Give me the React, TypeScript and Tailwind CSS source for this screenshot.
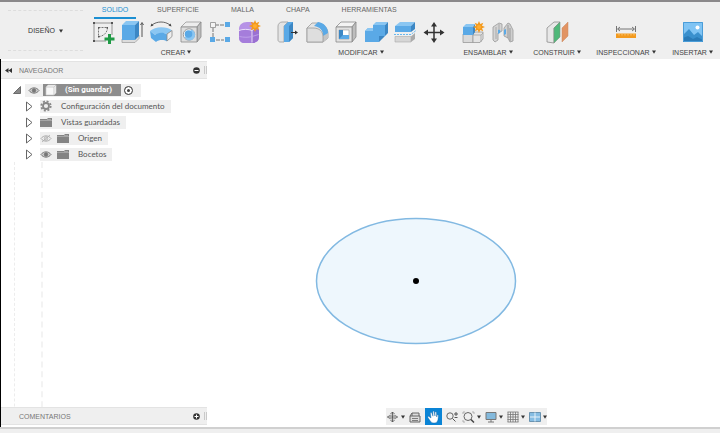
import type { ReactNode } from "react";

const BLUE = "#5aa9e6";
const BLUE_DARK = "#3c87c4";
const BLUE_LIGHT = "#8ac6f2";

function Svg({ children, w = 24, h = 24 }: { children: ReactNode; w?: number; h?: number }) {
  return (
    <svg width={w} height={h} viewBox={`0 0 ${w} ${h}`} fill="none" aria-hidden="true" className="block shrink-0">
      {children}
    </svg>
  );
}

function Caret() {
  return (
    <svg width="4" height="4" viewBox="0 0 4 4" aria-hidden="true" className="block shrink-0">
      <path d="M0 .5h4L2 3.7z" fill="#333" />
    </svg>
  );
}

function SketchIcon() {
  return (
    <Svg>
      <path d="M3 3h18M3 3v18M3 21h12M21 3v12" stroke="#8a8a8a" strokeWidth=".9" />
      <path d="M7.500 7.500h9c0 5-4 9-9 9z" stroke="#777" strokeDasharray="2 1" />
      <g fill="#555">
        <path d="M2 2h2v2H2zM20 2h2v2h-2zM2 20h2v2H2zM7 7h1.500v1.500H7zM15.500 7H17v1.500h-1.500zM7 16h1.500v1.500H7z" />
      </g>
      <path d="M17 14h3v3.500h3.500v3H20V24h-3v-3.500h-3.500v-3H17z" fill="#1f9a45" />
    </Svg>
  );
}

function ExtrudeIcon() {
  return (
    <Svg>
      <path d="M2 19v3.500h13l4-4V15z" fill="#dcdcdc" stroke="#999" strokeWidth=".7" />
      <path d="M2 5l4-4h13l-4 4z" fill={BLUE_LIGHT} />
      <path d="M2 5h13v15H2z" fill={BLUE} />
      <path d="M15 5l4-4v15l-4 4z" fill={BLUE_DARK} />
      <path d="M22 4v13M20.500 5L22 2.500 23.500 5" stroke="#444" strokeWidth=".9" />
    </Svg>
  );
}

function RevolveIcon() {
  return (
    <Svg>
      <path d="M3 5C8 1 16 1 21 5" stroke="#555" strokeWidth=".9" />
      <path d="M1.500 6.500l1-3 2 2zM22.500 6.500l-1-3-2 2z" fill="#444" />
      <path d="M1 11c5-5 17-5 22-.5l-5 4c-3-2-9-2-12 .5z" fill={BLUE_LIGHT} />
      <path d="M1 11l5 4c3-3 9-3 12-.5v7c-3-2-8-2-11 .5L2 18z" fill={BLUE} />
      <path d="M18 14l5-3.500v6L18 21z" fill="#eee" stroke="#888" strokeWidth=".8" />
    </Svg>
  );
}

function HoleIcon() {
  return (
    <Svg>
      <path d="M2 7l5-5h15l-4 5z" fill="#ededed" stroke="#999" strokeWidth=".8" />
      <path d="M18 7l4-5v15l-4 5z" fill="#bdbdbd" stroke="#888" strokeWidth=".8" />
      <path d="M2 7h16v15H2z" fill="#dedede" stroke="#8c8c8c" strokeWidth=".8" />
      <circle cx="10" cy="14.500" r="5.700" fill="#fafafa" stroke="#888" strokeWidth=".8" />
      <path d="M12 9.500a5.500 5.500 0 1 1-6.500 7.500c2.500-.5 6-3 6.500-7.500z" fill={BLUE_LIGHT} />
      <circle cx="9.500" cy="14" r="3.800" fill={BLUE} />
    </Svg>
  );
}

function PatternIcon() {
  return (
    <Svg>
      <path d="M7 5h9M5 8v9M8 20h8" stroke="#777" strokeDasharray="4 1" />
      <path d="M2.500 2.500h5v5h-5z" fill="#f4f4f4" stroke="#999" strokeWidth=".9" />
      <path d="M17 2h5v5h-5zM2 17h5v5H2zM17 17h5v5h-5z" fill={BLUE} />
    </Svg>
  );
}

function Spark({ x, y }: { x: number; y: number }) {
  return (
    <g transform={`translate(${x} ${y})`}>
      <path
        d="M0-6l1.300 3 3-1.300-1.300 3L6 0 3 1.300l1.300 3-3-1.300L0 6l-1.300-3-3 1.300 1.300-3L-6 0l3-1.300-1.300-3 3 1.300z"
        fill="#f39a1e"
      />
      <circle r="2" fill="#ffad32" />
    </g>
  );
}

function FormIcon() {
  return (
    <Svg>
      <path d="M2 9c0-4 3-7 8-7h5c4 1 7 4 7 8v7c0 4-3 6-7 6H8c-4 0-6-2-6-6z" fill="#b692e6" />
      <path d="M2 11c1-2 12-2 13 0v12H8c-4 0-6-2-6-6z" fill="#a57ddb" />
      <path d="M15 11c1-2 4-3 7-3v9c0 4-3 6-7 6z" fill="#9a70d2" />
      <path d="M2 10.500c3-1.500 10-1.500 13 0v12M15 10.500c2-1.500 4-2 7-2" stroke="#efe7fa" strokeWidth=".9" />
      <path d="M2.500 16.500c4 1 9 1 12.500 0l6.500-2" stroke="#c4a8ec" strokeWidth=".8" />
      <Spark x={18} y={6} />
    </Svg>
  );
}

function PressPullIcon() {
  return (
    <Svg>
      <path d="M2 6c0-2 2-4 4-4h6L8 6v16H4c-1 0-2-1-2-2z" fill="#e4e4e4" stroke="#999" strokeWidth=".8" />
      <path d="M8 6l4-4h5v16l-4 4H8z" fill={BLUE} />
      <path d="M13 6l4-4v16l-4 4z" fill={BLUE_DARK} />
      <path d="M15 12.500h5" stroke="#333" />
      <path d="M19 10.500l3 2-3 2z" fill="#333" />
    </Svg>
  );
}

function FilletIcon() {
  return (
    <Svg>
      <path d="M2 8l5-5h6c6 1 10 5 10 11v4l-5 4H2z" fill="#e4e4e4" stroke="#999" strokeWidth=".8" />
      <path d="M18 15l5-3v6l-5 4z" fill="#c4c4c4" />
      <path d="M9 6l4-4c6 1 10 5 10 11l-5 3c0-6-3-9-9-10z" fill={BLUE} />
      <path d="M2 8h6c6 0 10 3 10 9v5H2z" fill="#dedede" stroke="#999" strokeWidth=".8" />
    </Svg>
  );
}

function ShellIcon() {
  return (
    <Svg>
      <path d="M2 7l5-5h15l-4 5z" fill="#f4f4f4" stroke="#8c8c8c" strokeWidth=".8" />
      <path d="M18 7l4-5v15l-4 5z" fill="#bdbdbd" stroke="#888" strokeWidth=".8" />
      <path d="M2 7h16v15H2z" fill="#e2e2e2" stroke="#8c8c8c" strokeWidth=".8" />
      <path d="M5 10h10v9H5z" fill="#fff" stroke="#999" strokeWidth=".6" />
      <path d="M5 10l4 0v5h6v4H5z" fill={BLUE} />
      <path d="M5 10h4v5l-4 4z" fill={BLUE_DARK} />
    </Svg>
  );
}

function CombineIcon() {
  return (
    <Svg>
      <path d="M9 5l3-3h12l-3 3z" fill={BLUE_LIGHT} />
      <path d="M1 11l3-3h5V5h12v11h-6v6H1z" fill={BLUE} />
      <path d="M1 11l3-3h5v3z" fill={BLUE_LIGHT} />
      <path d="M21 5l3-3v11l-3 3zM15 16h6l-3 3v0l-3 3z" fill={BLUE_DARK} />
    </Svg>
  );
}

function SplitIcon() {
  return (
    <Svg>
      <path d="M2 6l5-4h15l-4 4z" fill={BLUE_LIGHT} />
      <path d="M2 6h16v6H2z" fill={BLUE} />
      <path d="M18 6l4-4v7l-4 3z" fill={BLUE_DARK} />
      <path d="M1 14.500h17l5-4" stroke="#69b8ee" strokeDasharray="2 1" />
      <path d="M2 16.500h16V22H2z" fill="#d6d6d6" stroke="#aaa" strokeWidth=".6" />
      <path d="M18 16.500l4-3.500v6l-4 3z" fill="#aaa" />
    </Svg>
  );
}

function MoveIcon() {
  return (
    <Svg>
      <path d="M12 4v17M4 12.500h17" stroke="#333" strokeWidth="1.500" />
      <path d="M12 2l3 4.500H9zM12 23l3-4.500H9zM1.500 12.500L6 9.500v6zM22.500 12.500L18 9.500v6z" fill="#333" />
    </Svg>
  );
}

function ComponentIcon() {
  return (
    <Svg>
      <path d="M2 14h10v8.500H2z" fill="#dadada" stroke="#999" strokeWidth=".8" />
      <path d="M12 14l2-2h8v7l-3 3.500h-7z" fill="#e4e4e4" stroke="#999" strokeWidth=".8" />
      <path d="M12 15h8v7M20 15l2-2" stroke="#999" strokeWidth=".7" />
      <path d="M2 7l3-3h9l-2 3z" fill={BLUE_LIGHT} />
      <path d="M2 7h10v8H2z" fill={BLUE} />
      <path d="M12 7l2-3v8l-2 3z" fill={BLUE_DARK} />
      <Spark x={18} y={7} />
    </Svg>
  );
}

function JointIcon() {
  return (
    <Svg>
      <path d="M2 7l6-4 3 1v7l-4 2v7l-3 2-2-2z" fill="#d4d4d4" stroke="#999" strokeWidth=".8" />
      <path d="M5 7v12M8 4v8" stroke="#aaa" />
      <path d="M7 10c2-1 3 1 2 3l-2 1z" fill={BLUE} />
      <path d="M13 8l4-5 2 1 3 6v11l-3 1-2-4-4-2z" fill="#cfcfcf" stroke="#999" strokeWidth=".8" />
      <path d="M17 5v13M19 8v13" stroke="#999" />
      <path d="M13 10l2-1v5l-2 1z" fill={BLUE} />
    </Svg>
  );
}

function PlaneIcon() {
  return (
    <Svg>
      <path d="M2 8l7-6h6L9 8v15l-7-1z" fill="#e7e7e7" stroke="#8d8d8d" strokeWidth=".8" />
      <path d="M9 8l6-6v15l-6 6z" fill="#4fb879" stroke="#78947f" strokeWidth=".6" />
      <path d="M17 8l6-6v14l-6 6z" fill="#e29463" stroke="#c98862" strokeWidth=".5" />
    </Svg>
  );
}

function MeasureIcon() {
  return (
    <Svg>
      <path d="M2.500 6v6M21.500 6v6M4 9h16M6 7L3.500 9 6 11M18 7l2.500 2-2.500 2" stroke="#666" strokeWidth=".9" />
      <path d="M2 13.500h20V18H2z" fill="#f39a1e" />
      <path d="M5 14v1.500M8 14v1.500M11 14v1.500M14 14v1.500M17 14v1.500M20 14v1.500" stroke="#fbd089" strokeWidth=".8" />
    </Svg>
  );
}

function ImageIcon() {
  return (
    <Svg>
      <path d="M2 2h20v20H2z" fill="#80c4f4" />
      <path d="M2 15l6-6 5 6 4-3 5 5v5H2z" fill="#3a90cd" />
      <path d="M2 18l5-2 5 3 4-2 6 3v2H2z" fill="#2a7bb8" />
      <circle cx="16.500" cy="7.500" r="2" fill="#fff" />
      <path d="M2.500 2.500h19v19h-19z" stroke="#4b9dd8" />
    </Svg>
  );
}

type Tool = { name: string; icon: ReactNode };

function ToolGroup({ label, tools, width }: { label: string; tools: Tool[]; width: string }) {
  return (
    <section className={`flex shrink-0 flex-col ${width}`}>
      <div className="flex h-6 justify-around">
        {tools.map((t) => (
          <button key={t.name} type="button" aria-label={t.name} className="flex flex-1 justify-center">
            {t.icon}
          </button>
        ))}
      </div>
      <button type="button" className="flex h-4 items-center justify-center gap-[2px] whitespace-nowrap">
        {label}
        <Caret />
      </button>
    </section>
  );
}

const tabs = ["SOLIDO", "SUPERFICIE", "MALLA", "CHAPA", "HERRAMIENTAS"];

function Ribbon() {
  return (
    <header className="flex h-[59px] shrink-0 overflow-hidden border-t-2 border-[#8b898b] bg-[#efefef] text-[7px] leading-none text-[#444]">
      <div className="flex w-[88px] shrink-0 py-2 pl-2">
        <button type="button" className="flex w-[75px] items-center justify-center gap-1 border-y border-dashed border-[#ddd] font-medium text-[#333]">
          DISEÑO
          <Caret />
        </button>
      </div>
      <div className="min-w-0 flex-1">
        <nav className="flex h-[17px] gap-[10px] pl-[6px]">
          {tabs.map((t, i) => (
            <button
              key={t}
              type="button"
              className={
                i === 0
                  ? "w-[42px] border-b-2 border-[#1c8fd2] text-[#1c8fd2]"
                  : "border-b-2 border-transparent px-[11px] text-[#666]"
              }
            >
              {t}
            </button>
          ))}
        </nav>
        <div className="flex gap-[9px] pt-px">
          <ToolGroup
            label="CREAR"
            width="w-[176px]"
            tools={[
              { name: "Crear boceto", icon: <SketchIcon /> },
              { name: "Extruir", icon: <ExtrudeIcon /> },
              { name: "Revolución", icon: <RevolveIcon /> },
              { name: "Agujero", icon: <HoleIcon /> },
              { name: "Patrón", icon: <PatternIcon /> },
              { name: "Crear forma", icon: <FormIcon /> },
            ]}
          />
          <ToolGroup
            label="MODIFICAR"
            width="w-[176px]"
            tools={[
              { name: "Pulsar/tirar", icon: <PressPullIcon /> },
              { name: "Empalme", icon: <FilletIcon /> },
              { name: "Vaciado", icon: <ShellIcon /> },
              { name: "Combinar", icon: <CombineIcon /> },
              { name: "Dividir cuerpo", icon: <SplitIcon /> },
              { name: "Mover", icon: <MoveIcon /> },
            ]}
          />
          <ToolGroup
            label="ENSAMBLAR"
            width="w-[60px]"
            tools={[
              { name: "Nuevo componente", icon: <ComponentIcon /> },
              { name: "Unión", icon: <JointIcon /> },
            ]}
          />
          <ToolGroup label="CONSTRUIR" width="w-[60px]" tools={[{ name: "Plano", icon: <PlaneIcon /> }]} />
          <ToolGroup label="INSPECCIONAR" width="w-[60px]" tools={[{ name: "Medir", icon: <MeasureIcon /> }]} />
          <ToolGroup label="INSERTAR" width="w-[55px]" tools={[{ name: "Imagen", icon: <ImageIcon /> }]} />
        </div>
      </div>
    </header>
  );
}

function PanelBar({ title, open }: { title: string; open: boolean }) {
  return (
    <div className="flex h-[18px] shrink-0 items-center border-y border-[#e3e3e3] bg-[#efefef] pl-1 text-[7px] leading-none text-[#777]">
      <span className="w-[14px]">
        {open && (
          <svg width="7" height="5" viewBox="0 0 7 5" aria-hidden="true">
            <path d="M3.500 0v5L0 2.500zM7 0v5L3.500 2.500z" fill="#333" />
          </svg>
        )}
      </span>
      <h2 className="flex-1">{title}</h2>
      <button type="button" aria-label={open ? "Contraer" : "Expandir"}>
        <Svg w={7} h={7}>
          <circle cx="3.500" cy="3.500" r="3.300" fill="#333" />
          <path d={open ? "M1.500 3.500h4" : "M1.500 3.500h4M3.500 1.500v4"} stroke="#fff" />
        </Svg>
      </button>
      <span className="ml-1 h-2 w-[3px] border-x border-[#c9c9c9]" />
    </div>
  );
}

function Eye({ off = false }: { off?: boolean }) {
  const c = off ? "#aaa" : "#777";
  return (
    <Svg w={12} h={9}>
      <path d="M1 4.500C3.500 1 8.500 1 11 4.500 8.500 8 3.500 8 1 4.500z" stroke={c} fill={off ? "none" : "#ccc"} />
      <circle cx="6" cy="4.500" r="1.800" fill={off ? "#ddd" : c} stroke={c} strokeWidth=".7" />
      {off && <path d="M2 8l8-7" stroke={c} strokeWidth=".8" />}
    </Svg>
  );
}

function Folder() {
  return (
    <Svg w={12} h={10}>
      <path d="M0 2h7l1-1h4v9H0z" fill="#848484" />
      <path d="M0 3.500h12M7 2.500h4" stroke="#b5b5b5" strokeWidth=".7" />
    </Svg>
  );
}

function Gear() {
  return (
    <Svg w={12} h={12}>
      <circle cx="6" cy="6" r="4.700" stroke="#888" strokeWidth="1.800" strokeDasharray="2 1.690" />
      <circle cx="6" cy="6" r="3" stroke="#888" strokeWidth="1.800" fill="#eee" />
    </Svg>
  );
}

function TreeRow({ label, icons }: { label: string; icons: ReactNode }) {
  return (
    <li className="flex h-4 items-center pl-6">
      <button type="button" aria-label={`Expandir ${label}`} className="w-[15px]">
        <Svg w={8} h={11}>
          <path d="M1.500 1v9L7 5.500z" fill="#fff" stroke="#666" />
        </Svg>
      </button>
      <span className="flex h-[13px] items-center gap-[5px] bg-[#efefef] pr-[6px]">
        {icons}
        <span className="pl-1">{label}</span>
      </span>
    </li>
  );
}

function Browser() {
  return (
    <aside className="flex w-[206px] shrink-0 flex-col pt-[2px] pb-[2px]">
      <PanelBar title="NAVEGADOR" open />
      <div className="min-h-0 flex-1 overflow-hidden pt-[3px] font-[Lato,'Liberation_Sans',sans-serif] text-[8px] leading-none text-[#555]">
        <ul>
          <li className="flex h-4 items-center pl-3">
            <Svg w={8} h={8}>
              <path d="M7.500 .5v7h-7z" fill="#888" stroke="#555" strokeWidth=".8" />
            </Svg>
            <span className="ml-1 flex h-[13px] items-center gap-[3px] bg-[#efefef] pl-[3px] pr-2">
              <Eye />
              <span className="flex h-3 w-[78px] items-center gap-2 bg-[#8d8d8d] pl-[2px] font-[Roboto,'Liberation_Sans',sans-serif] font-bold text-white">
                <Svg w={12} h={12}>
                  <path d="M1 3l2-2h8v8l-2 2H1z" fill="#f8f8f8" stroke="#ccc" strokeWidth=".7" />
                  <path d="M1 3h8v8M9 3l2-2" stroke="#bbb" strokeWidth=".7" />
                </Svg>
                (Sin guardar)
              </span>
              <label className="flex">
                <input
                  type="radio"
                  defaultChecked
                  aria-label="Activar componente"
                  className="block size-[9px] appearance-none rounded-full border border-[#555] bg-[#444] shadow-[inset_0_0_0_2px_#fff]"
                />
              </label>
            </span>
          </li>
          <TreeRow label="Configuración del documento" icons={<Gear />} />
          <TreeRow label="Vistas guardadas" icons={<Folder />} />
          <TreeRow label="Origen" icons={<><Eye off /><Folder /></>} />
          <TreeRow label="Bocetos" icons={<><Eye /><Folder /></>} />
        </ul>
        <div className="flex h-full gap-[26px] pl-[13px]" aria-hidden="true">
          <span className="border-l border-dashed border-[#ececec]" />
          <span className="border-l-2 border-dashed border-[#f3f3f3]" />
        </div>
      </div>
      <PanelBar title="COMENTARIOS" open={false} />
    </aside>
  );
}

function NavButton({ name, children, caret = false }: { name: string; children: ReactNode; caret?: boolean }) {
  return (
    <button type="button" aria-label={name} className="flex h-full items-center gap-[2px]">
      {children}
      {caret && <Caret />}
    </button>
  );
}

function ViewBar() {
  return (
    <div className="absolute bottom-[2px] left-[179px] flex h-[17px] items-center gap-1 bg-[#efefef] pl-px">
      <NavButton name="Orbitar" caret>
        <Svg w={12} h={12}>
          <path d="M5.500 1v10M0 6h11M3.500 3l2-2 2 2M3.500 9l2 2 2-2" stroke="#555" strokeWidth=".9" />
          <ellipse cx="5.500" cy="6" rx="4.500" ry="2" stroke="#777" strokeWidth=".8" />
        </Svg>
      </NavButton>
      <NavButton name="Mirar a">
        <Svg w={12} h={12}>
          <path d="M1 5h10v6H1zM3 5V2h7v3M1 5l2-3" fill="#ddd" stroke="#666" />
          <path d="M3 7.500h6M3 9.500h6" stroke="#666" strokeWidth=".8" />
        </Svg>
      </NavButton>
      <button type="button" aria-label="Encuadre" className="flex h-full w-[17px] items-center justify-center bg-[#0a84d6]">
        <Svg w={13} h={14}>
          <path
            d="M4 8L2 6.500C1 5.800 .5 7 1 7.700l3 4.300c1 1.300 5 1.300 6 0 1-1.500 1.200-3 1.400-6.500 0-1-1.200-1-1.400 0L9.700 7 9.500 2.500c0-1-1.400-1-1.500 0V6L7.200 1.800c-.1-1-1.500-.9-1.400.1L6 6.200 4.800 3c-.3-.9-1.600-.5-1.400.4z"
            fill="#fff"
            stroke="#1261a0"
            strokeWidth=".4"
          />
        </Svg>
      </button>
      <NavButton name="Zoom">
        <Svg w={12} h={12}>
          <circle cx="4" cy="5" r="3.200" stroke="#666" />
          <path d="M6.500 7.500l3 3M8 3h4M10 1v4M8.500 6.500h3" stroke="#555" />
        </Svg>
      </NavButton>
      <NavButton name="Ajustar" caret>
        <Svg w={13} h={12}>
          <circle cx="6" cy="5.500" r="4" stroke="#666" />
          <path d="M9 8.500l3 3" stroke="#444" strokeWidth="1.500" />
          <path d="M1 3V1h2M1 9v2h2M10 1h2v2" stroke="#999" strokeWidth=".7" />
        </Svg>
      </NavButton>
      <NavButton name="Visualización" caret>
        <Svg w={12} h={12}>
          <path d="M1 1.500h10v7H1z" fill="#83b9dc" stroke="#777" />
          <path d="M6 9v2M3 11h6" stroke="#777" />
        </Svg>
      </NavButton>
      <NavButton name="Rejilla" caret>
        <Svg w={12} h={12}>
          <path d="M1 1v10M3.500 1v10M6 1v10M8.500 1v10M11 1v10M.5 1h11M.5 3.500h11M.5 6h11M.5 8.500h11M.5 11h11" stroke="#777" strokeWidth=".8" />
        </Svg>
      </NavButton>
      <NavButton name="Ventanas gráficas" caret>
        <Svg w={12} h={12}>
          <path d="M.5 1.500h11v9H.5z" fill="#86bde3" stroke="#6b94b1" />
          <path d="M6 1.500v9M1 6h10" stroke="#e8f2f9" />
        </Svg>
      </NavButton>
    </div>
  );
}

export default function App() {
  return (
    <div className="flex h-screen flex-col overflow-hidden bg-white font-['Liberation_Sans',Arial,sans-serif]">
      <Ribbon />
      <main className="flex min-h-0 flex-1 border-l border-black">
        <Browser />
        <section className="relative min-w-0 flex-1" aria-label="Lienzo">
          <svg className="absolute left-[108px] top-[158px]" width="202" height="128" viewBox="0 0 202 128" aria-label="Boceto de elipse">
            <ellipse cx="101" cy="64" rx="99.500" ry="62.500" fill="#eef7fd" stroke="#82b9e2" strokeWidth="1.500" />
            <circle cx="101" cy="64" r="3" fill="#000" />
          </svg>
          <ViewBar />
        </section>
      </main>
      <footer className="h-[6px] shrink-0 border-t-2 border-[#d0d0d0] bg-[#efefef]" />
    </div>
  );
}
